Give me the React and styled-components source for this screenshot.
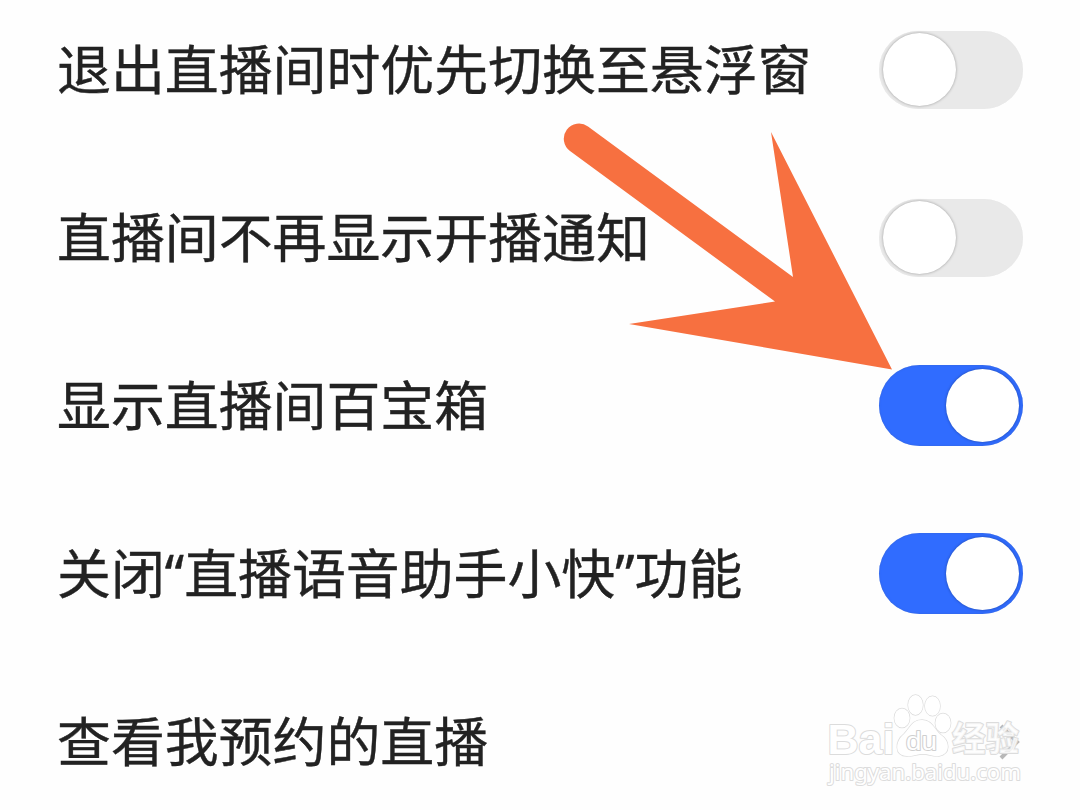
import React, { useState } from "react";
import styled, { createGlobalStyle } from "styled-components";

const GlobalStyle = createGlobalStyle`
  * {
    margin: 0;
    padding: 0;
    box-sizing: border-box;
  }
  body {
    background-color: #fefefe;
    overflow: hidden;
  }
`;

const Page = styled.div`
  position: relative;
  width: 1080px;
  height: 810px;
  overflow: hidden;
  background-color: #fefefe;
  font-family: "Noto Sans", "Noto Sans CJK SC", sans-serif;
`;

const SettingList = styled.ul`
  list-style-type: none;
  margin-top: -14px;
`;

const SettingRow = styled.li`
  display: flex;
  justify-content: space-between;
  align-items: center;
  height: 168px;
  padding: 0 57px 0 57px;
`;

const Label = styled.span`
  padding-bottom: 3px;
  font-size: 53.9px;
  line-height: 76px;
  color: #222222;
  -webkit-text-stroke: 0.4px #222222;
  white-space: nowrap;
`;

const Switch = styled.button`
  display: flex;
  align-items: center;
  justify-content: ${(props) => (props.$on ? "flex-end" : "flex-start")};
  width: 144px;
  height: ${(props) => (props.$on ? "81px" : "78px")};
  margin-bottom: 1px;
  padding: 0 4px;
  border: none;
  border-radius: 41px;
  background-color: ${(props) => (props.$on ? "#306cff" : "#e9e9e9")};
  box-shadow: ${(props) =>
    props.$on ? "inset 0 0 2px #3a66cf" : "inset 0 0 1px #e4e4e4"};
`;

const Knob = styled.span`
  width: 73px;
  height: 73px;
  border-radius: 50%;
  background-color: #ffffff;
  box-shadow: 0 0 3px rgba(0, 0, 0, 0.35);
`;

const Chevron = styled.svg`
  width: 24px;
  height: 40px;
`;

const Arrow = styled.svg`
  position: absolute;
  left: 550px;
  top: 110px;
  width: 360px;
  height: 270px;
`;

const Watermark = styled.svg`
  position: absolute;
  left: 820px;
  top: 680px;
  width: 220px;
  height: 120px;
  paint-order: stroke;
  fill: #ffffff;
  stroke: #dcdcdc;
  stroke-width: 2px;
  stroke-linejoin: round;

  text {
    font-family: "Noto Sans", "Noto Sans CJK SC", sans-serif;
  }
  .name {
    font-family: "Liberation Sans", "Noto Sans CJK SC", sans-serif;
    font-weight: 700;
  }
  .du {
    font-family: "Liberation Sans", sans-serif;
    stroke: #cfcfcf;
  }
  .paw {
    stroke-width: 1.3px;
  }
`;

const settings = [
  { label: "退出直播间时优先切换至悬浮窗", on: false },
  { label: "直播间不再显示开播通知", on: false },
  { label: "显示直播间百宝箱", on: true },
  { label: "关闭“直播语音助手小快”功能", on: true },
];

const Setting = ({ label, on }) => {
  const [checked, setChecked] = useState(on);

  return (
    <SettingRow>
      <Label>{label}</Label>
      <Switch
        $on={checked}
        role="switch"
        aria-checked={checked}
        onClick={() => setChecked(!checked)}
      >
        <Knob />
      </Switch>
    </SettingRow>
  );
};

const BaiduMark = () => (
  <Watermark viewBox="0 0 220 120">
    <text className="name" x="7.5" y="74" fontSize="43" textLength="67" lengthAdjust="spacingAndGlyphs">
      Bai
    </text>
    <g className="paw">
      <ellipse cx="82" cy="38" rx="7.7" ry="9.5" />
      <ellipse cx="95.5" cy="25" rx="7.4" ry="10" />
      <ellipse cx="112.5" cy="26" rx="7.6" ry="9.8" />
      <ellipse cx="123" cy="43" rx="7.7" ry="9.5" />
      <path d="M102 40C92 40 90 48 84 54C75 61 74 76 87 76C92 77 97 74 103 74C109 74 113 77 119 76C131 74 130 61 121 55C114 49 112 40 102 40Z" />
    </g>
    <text className="du" x="86" y="70" fontSize="26" textLength="31" lengthAdjust="spacingAndGlyphs">
      du
    </text>
    <text className="name" x="132" y="71" fontSize="34" textLength="67" fillOpacity="0.75" lengthAdjust="spacingAndGlyphs">
      经验
    </text>
    <text x="9" y="99.5" fontSize="22" textLength="192" lengthAdjust="spacingAndGlyphs">
      jingyan.baidu.com
    </text>
  </Watermark>
);

const App = () => {
  return (
    <>
      <GlobalStyle />
      <Page>
        <SettingList>
          {settings.map((item) => (
            <Setting key={item.label} label={item.label} on={item.on} />
          ))}
          <SettingRow>
            <Label>查看我预约的直播</Label>
            <Chevron viewBox="0 0 24 40">
              <path d="M2 4L18 20L2 36" fill="none" stroke="#b8b8b8" strokeWidth="4" />
            </Chevron>
          </SettingRow>
        </SettingList>
        <Arrow viewBox="0 0 360 270">
          <path
            d="M38 16.5L243 167L221 22L342 259.5L79 214L225 191.5L20 41A14.8 14.8 0 0 1 38 16.5Z"
            fill="#f77040"
          />
        </Arrow>
        <BaiduMark />
      </Page>
    </>
  );
};

export default App;
